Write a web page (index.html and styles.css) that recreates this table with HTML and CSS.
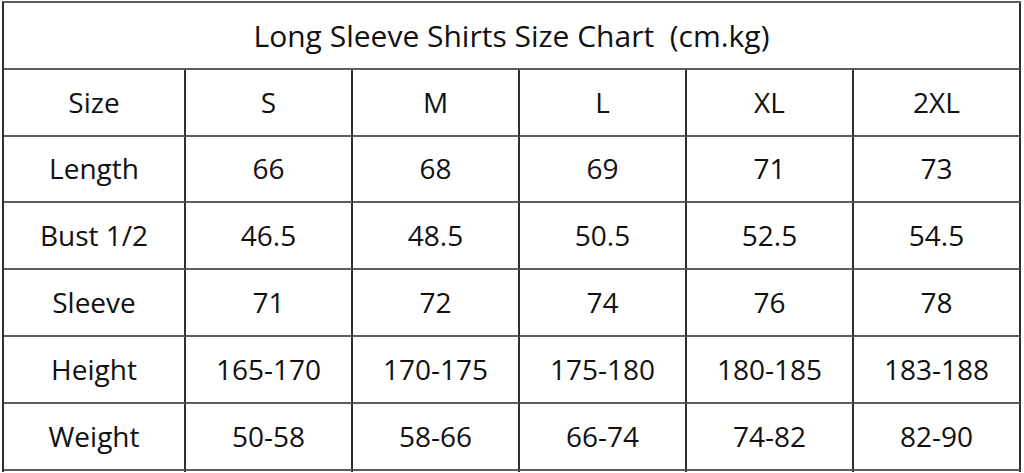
FILE: index.html
```html
<!DOCTYPE html>
<html>
<head>
<meta charset="utf-8">
<link rel="stylesheet" href="styles.css">
</head>
<body>
<div class="chart">
  <div class="cell title">Long Sleeve Shirts Size Chart&nbsp; (cm.kg)</div>
  <div class="cell">Size</div><div class="cell">S</div><div class="cell">M</div><div class="cell">L</div><div class="cell">XL</div><div class="cell">2XL</div>
  <div class="cell">Length</div><div class="cell">66</div><div class="cell">68</div><div class="cell">69</div><div class="cell">71</div><div class="cell">73</div>
  <div class="cell">Bust 1/2</div><div class="cell">46.5</div><div class="cell">48.5</div><div class="cell">50.5</div><div class="cell">52.5</div><div class="cell">54.5</div>
  <div class="cell">Sleeve</div><div class="cell">71</div><div class="cell">72</div><div class="cell">74</div><div class="cell">76</div><div class="cell">78</div>
  <div class="cell">Height</div><div class="cell">165-170</div><div class="cell">170-175</div><div class="cell">175-180</div><div class="cell">180-185</div><div class="cell">183-188</div>
  <div class="cell">Weight</div><div class="cell">50-58</div><div class="cell">58-66</div><div class="cell">66-74</div><div class="cell">74-82</div><div class="cell">82-90</div>
  <div class="cell stub"></div><div class="cell stub"></div><div class="cell stub"></div><div class="cell stub"></div><div class="cell stub"></div><div class="cell stub"></div>
</div>
</body>
</html>
```
FILE: styles.css
```css
html, body {
  margin: 0;
  padding: 0;
  background: #ffffff;
  overflow: hidden;
}
.chart {
  margin: 1px 0 0 2px;
  display: grid;
  grid-template-columns: 182px repeat(5, 167px);
  grid-template-rows: repeat(7, 66.8px) 1px;
  border-top: 2px solid #5e5e5e;
  border-left: 2px solid #2e2e2e;
  width: max-content;
  font-family: "Open Sans", "Noto Sans", sans-serif;
  color: #111111;
}
.cell {
  box-sizing: border-box;
  border-right: 2px solid #2e2e2e;
  border-bottom: 2px solid #5e5e5e;
  display: flex;
  align-items: center;
  justify-content: center;
  font-size: 28px;
  line-height: 1;
  padding-bottom: 1px;
  min-height: 0;
}
.title {
  grid-column: 1 / -1;
  font-size: 30px;
  padding-top: 2px;
}
.stub {
  border-bottom: none;
  padding: 0;
}
```
